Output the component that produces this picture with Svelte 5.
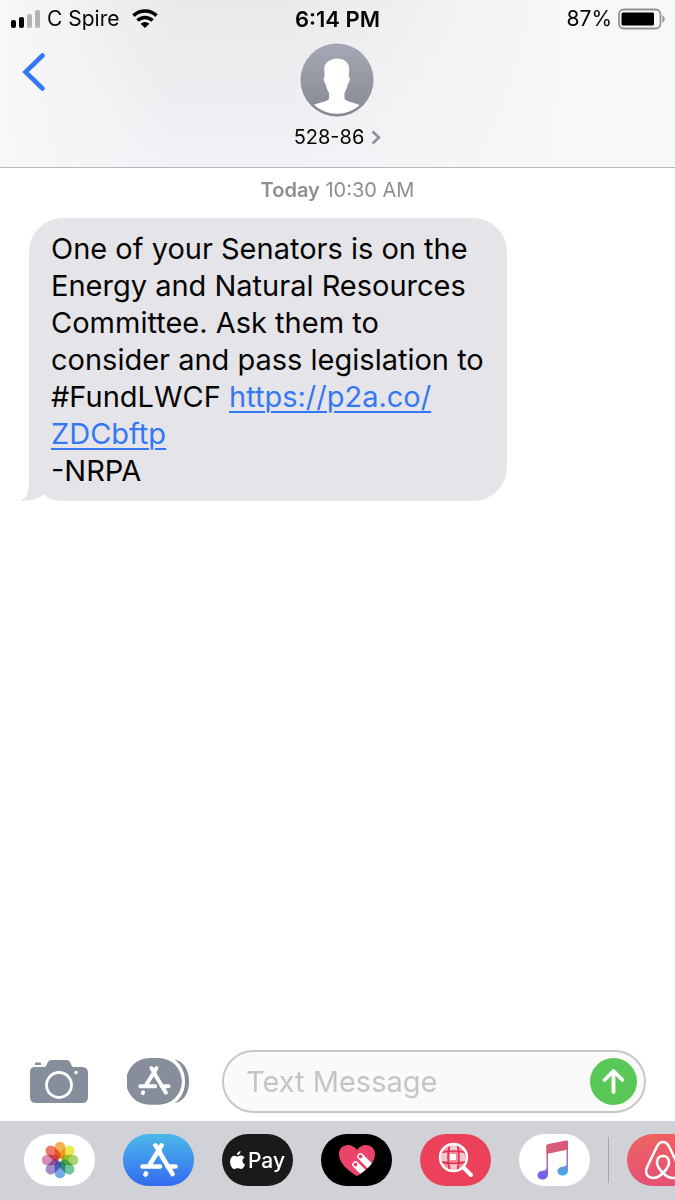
<script>
  let draft = $state('');
  const petals = [
    ['#f7a540', 0], ['#ece23c', 45], ['#9ccf5c', 90], ['#62c08a', 135],
    ['#62a2e2', 180], ['#9c7fc6', 225], ['#d283b4', 270], ['#ee6a58', 315]
  ];
</script>

{#snippet appStore()}
  <g fill="none" stroke="#fff" stroke-width="4.600" stroke-linecap="round">
    <path d="M21.500 2.500 9.500 22M15.500 2.500 20 9M20.500 11 32.500 31M2.500 23.500H20M27.500 23.500H35.500M6 30.500 5.500 31.500" />
  </g>
{/snippet}

<div class="phone">
  <header>
    <div class="status">
      <div class="carrier">
        <svg width="31" height="20" viewBox="0 0 31 20" aria-hidden="true">
          <rect x="2" y="11" width="5" height="8" rx="2" />
          <rect x="10" y="8" width="5" height="11" rx="2" />
          <rect x="18" y="5" width="5" height="14" rx="2" fill="#b4b4b6" />
          <rect x="26" y="1" width="5" height="18" rx="2" fill="#b4b4b6" />
        </svg>
        <span>C Spire</span>
        <svg class="wifi" width="26" height="19" viewBox="0 0 26 19" aria-hidden="true">
          <g fill="none" stroke="#000" stroke-width="3.600">
            <path d="M1.500 6.600A16.500 16.500 0 0 1 24.500 6.600" />
            <path d="M5.500 11.500A10.800 10.800 0 0 1 20.500 11.500" />
          </g>
          <path d="M8.600 14.800a6.200 6.200 0 0 1 8.800 0L13 19z" />
        </svg>
      </div>
      <time>6:14 PM</time>
      <div class="battery">
        <span>87%</span>
        <svg width="48" height="22" viewBox="0 0 48 22" aria-hidden="true">
          <rect x="1" y="1.500" width="41.500" height="19" rx="5" fill="none" stroke="#929294" stroke-width="1.800" />
          <rect x="3.500" y="4.500" width="32.500" height="13" rx="1.500" />
          <path d="M44.500 7q4.500 4 0 8z" fill="#929294" />
        </svg>
      </div>
    </div>
    <div class="nav">
      <button class="back" aria-label="Back">
        <svg width="24" height="40" viewBox="0 0 24 40"><path d="M20.500 3.500 3.500 20l17 16.500" fill="none" stroke="#3478f6" stroke-width="4.600" stroke-linecap="round" stroke-linejoin="miter" /></svg>
      </button>
      <button class="contact">
        <svg width="74" height="74" viewBox="0 0 74 74" aria-hidden="true">
          <defs>
            <linearGradient id="grey" x2="0" y2="1"><stop stop-color="#a3a8b4" /><stop offset="1" stop-color="#858993" /></linearGradient>
            <clipPath id="face"><circle cx="37" cy="37" r="33.800" /></clipPath>
          </defs>
          <circle cx="37" cy="37" r="36.500" fill="url(#grey)" />
          <path clip-path="url(#face)" fill="#fff" d="M37 15.500c8 0 12.500 4.500 12.200 11.500l-.4 6.500c1.800.3 1 5.500-1 7.800-.6 4-1.800 6.200-3.300 8.200v6.500c3 3.200 10 3.500 16.500 6.500V75H12V62.500c6.500-3 14-3.400 17-6.500v-6.500c-1.500-2-2.700-4.200-3.300-8.200-2-2.300-2.800-7.500-1-7.800L24.300 27c-.3-5 1.700-7.500 4.700-9 2-1.600 5-2.500 8-2.500z" />
        </svg>
        <span class="name">528-86
          <svg width="10" height="15" viewBox="0 0 10 15" aria-hidden="true"><path d="m1.500 1.500 6.500 6-6.500 6" fill="none" stroke="#8e8e93" stroke-width="2.400" /></svg>
        </span>
      </button>
    </div>
  </header>

  <main>
    <p class="date"><b>Today</b> 10:30 AM</p>
    <div class="bubble">
      One of your Senators is on the Energy and Natural Resources Committee. Ask them to consider and pass legislation to #FundLWCF <a href="https://p2a.co/ZDCbftp">https://p2a.co/<wbr />ZDCbftp</a><br />-NRPA
      <svg class="tail" width="32" height="36" viewBox="0 0 32 36" aria-hidden="true">
        <path d="M0 36h32v-1q-6 0-11-3.500Q14 36 0 36z" fill="#fff" />
        <path d="M9 0v18C9 28 6 33.500 0 35.500c8 1 15-.5 20.500-4L32 24V0z" fill="#e5e4e9" />
      </svg>
    </div>
  </main>

  <form class="compose" onsubmit={(e) => e.preventDefault()}>
    <button type="button" aria-label="Camera">
      <svg width="60" height="44" viewBox="0 0 60 44">
        <g fill="#868d9b">
          <rect x="6" y="2.500" width="6" height="2.500" rx=".5" />
          <path d="M6 7h9c4 0 2-7 8-7h14c6 0 4 7 8 7h8q6 0 6 6v24q0 6-6 6H7q-6 0-6-6V12q0-5 5-5z" />
        </g>
        <circle cx="30" cy="25" r="12.500" fill="none" stroke="#fff" stroke-width="2.800" />
        <circle cx="47" cy="12.500" r="1.700" fill="#fff" />
      </svg>
    </button>
    <button type="button" aria-label="Apps">
      <svg width="63" height="48" viewBox="0 0 63 48">
        <path d="M22.500 0h9a23.400 23.400 0 0 1 0 46.800h-9a23.400 23.400 0 0 1 0-46.800z" fill="#868d9b" />
        <path d="M47.500 1.500c19.500 3 19.500 41 0 43.500 14-9 14-34 0-43.500z" fill="#868d9b" />
        <g transform="translate(11 8) scale(.86)">{@render appStore()}</g>
      </svg>
    </button>
    <div class="field">
      <input aria-label="Text Message" placeholder="Text Message" bind:value={draft} />
      <button class="send" aria-label="Send">
        <svg width="47" height="47" viewBox="0 0 47 47"><circle cx="23.500" cy="23.500" r="23.500" fill="#5ac856" /><path d="M23.500 34V13.500M14.500 22l9-9 9 9" fill="none" stroke="#fff" stroke-width="3.800" stroke-linecap="round" stroke-linejoin="round" /></svg>
      </button>
    </div>
  </form>

  <nav class="apps" aria-label="Message apps">
    <button class="white" aria-label="Photos">
      <svg width="40" height="40" viewBox="-20 -20 40 40">
        {#each petals as [color, angle]}
          <rect class="petal" x="-5.300" y="-18.300" width="10.600" height="17" rx="5.300" fill={color} transform="rotate({angle})" />
        {/each}
        <circle r="1.200" fill="#fff" />
      </svg>
    </button>
    <button class="store" aria-label="App Store">
      <svg width="38" height="34" viewBox="0 0 38 34">{@render appStore()}</svg>
    </button>
    <button class="pay" aria-label="Apple Pay">
      <svg width="15" height="19" viewBox="0 0 15 19"><path fill="#fff" d="M10.500 0c.2 2.300-1.500 4.200-3.500 4.200C6.800 2.100 8.500.3 10.500 0zM7.500 5.500c1 0 2-.9 3.500-.9 1.400 0 2.700.7 3.500 1.800-3 1.800-2.500 5.800.5 7-.8 2.200-2.300 4.600-4 4.600-1.200 0-1.800-.7-3.300-.7s-2.200.7-3.200.7C2 18-.2 13.600.1 10c.2-3.300 2.200-5.300 4.400-5.300 1.200 0 2.200.8 3 .8z" /></svg>
      <span>Pay</span>
    </button>
    <button class="black" aria-label="Digital Touch">
      <svg width="36" height="33" viewBox="0 0 36 33">
        <defs><clipPath id="heart"><path d="M18 32C13 29 0 21 0 10 0 4.500 4 1 9 1c4 0 7 2 9 5 2-3 5-5 9-5 5 0 9 3.500 9 9 0 11-13 19-18 22z" /></clipPath></defs>
        <g clip-path="url(#heart)">
          <path d="M0 0h36v33H0z" fill="#ea4469" />
          <g stroke="#fff" stroke-width="6.500" stroke-linecap="round"><path d="M21.500 12.500 37 28M16.500 20.500 31 35" /></g>
        </g>
        <g fill="#ea4469"><circle cx="21.500" cy="12.500" r="1.900" /><circle cx="16.500" cy="20.500" r="1.900" /></g>
      </svg>
    </button>
    <button class="red" aria-label="Image search">
      <svg width="36" height="36" viewBox="0 0 36 36">
        <circle cx="15.500" cy="15.500" r="13.500" fill="#f58b9c" />
        <path d="M4 11h7v8H3zM20 11h6l2 8h-8zM12 3h7l1 6h-8zM12 21h8l-1 7h-6z" fill="#fbc5cd" />
        <path d="M12 12h6v6h-6z" fill="#fff" />
        <path d="M3 10.500q12.500-3 25 0M3 20q12.500 3 25 0M11.500 3q-3 12.500 0 25M19.500 3q3 12.500 0 25" fill="none" stroke="#d92f4b" stroke-width="1.600" />
        <circle cx="15.500" cy="15.500" r="13.500" fill="none" stroke="#fff" stroke-width="2.400" />
        <path d="m26 26 7 7" stroke="#fff" stroke-width="4" stroke-linecap="round" />
      </svg>
    </button>
    <button class="white" aria-label="Music">
      <svg width="36" height="40" viewBox="0 0 36 40">
        <defs>
          <linearGradient id="left" gradientUnits="userSpaceOnUse" x2="0" y2="40"><stop offset=".1" stop-color="#e35570" /><stop offset=".55" stop-color="#b868bd" /><stop offset=".9" stop-color="#7061f2" /></linearGradient>
          <linearGradient id="right" gradientUnits="userSpaceOnUse" x2="0" y2="36"><stop offset=".1" stop-color="#e35570" /><stop offset=".55" stop-color="#9a78cb" /><stop offset=".9" stop-color="#4ba3ee" /></linearGradient>
        </defs>
        <path d="M9.500 5H11v29c0 3-2 5.500-5.500 5.500-3 0-5-1.700-5-4.300 0-3.200 3-4.400 6-4.700 2-.2 3-.8 3-2.500z" fill="url(#left)" />
        <path d="M31 1v28.500c0 4-2 6-5.500 6-3 0-5-1.700-5-4.300 0-3.200 3-4.400 6-4.700 2-.2 3-.8 3-2.500V1z" fill="url(#right)" />
        <path d="M9.500 6q0-1.600 1.700-2L29 .5q2-.4 2 1.200V9.500L9.500 14z" fill="#d95b7c" />
      </svg>
    </button>
    <span class="divider"></span>
    <button class="coral" aria-label="Airbnb">
      <svg width="36" height="40" viewBox="0 0 36 40"><path d="M18 33C14 29 12 25.500 12 22.500c0-4 2.500-6.500 6-6.500s6 2.500 6 6.500c0 3-2 6.500-6 10.500-3 3-6 5-9.500 5C4 38 1 35 1 31c0-2 1-4 3-8L12 6.500C13.500 3.500 15 2 18 2s4.500 1.500 6 4.500L32 23c2 4 3 6 3 8 0 4-3 7-7.500 7-3.500 0-6.500-2-9.500-5z" fill="none" stroke="#fff" stroke-width="2.600" /></svg>
    </button>
  </nav>
</div>

<style>
  :global(body) { margin: 0; }
  .phone {
    min-height: 100vh;
    display: flex;
    flex-direction: column;
    overflow: hidden;
    background: #fff;
    color: #050505;
    font-family: Inter, "Liberation Sans", sans-serif;
  }
  button {
    border: 0;
    padding: 0;
    background: none;
    color: inherit;
    font: inherit;
    cursor: pointer;
  }
  svg { display: block; flex: none; }
  header {
    border-bottom: 1px solid #b9b9bc;
    background:
      linear-gradient(90deg, #f8f8f9 0%, #f8f8f900 26%, #f8f8f900 42%, #f8f8f9 85%),
      linear-gradient(#e9e9eb, #f1f2f6);
  }
  .status {
    display: grid;
    grid-template-columns: 1fr auto 1fr;
    align-items: center;
    height: 37px;
    padding: 0 9px;
    font-size: 21px;
  }
  .status time { font-size: 22px; font-weight: 600; }
  .carrier, .battery { display: flex; align-items: center; }
  .carrier { gap: 7px; }
  .wifi { margin-left: 6px; }
  .battery { justify-content: flex-end; gap: 6px; }
  .nav {
    display: grid;
    grid-template-columns: 1fr auto 1fr;
    align-items: start;
    padding: 6px 22px 17px;
  }
  .back { justify-self: start; padding-top: 9px; }
  .contact {
    display: flex;
    flex-direction: column;
    align-items: center;
    gap: 7px;
    font-size: 20px;
    line-height: 26px;
  }
  .name { display: flex; align-items: center; gap: 7px; }
  main { flex: 1; padding: 9px 29px; }
  .date {
    margin: 0;
    text-align: center;
    font-size: 20px;
    line-height: 26px;
    color: #8e8e93;
  }
  .date b { font-weight: 600; }
  .bubble {
    position: relative;
    box-sizing: border-box;
    width: fit-content;
    max-width: 478px;
    margin-top: 15px;
    padding: 12px 22px;
    border-radius: 34px;
    background: #e5e4e9;
    font-size: 29px;
    line-height: 37px;
  }
  .bubble a { color: #3478f6; text-decoration-thickness: 2px; text-underline-offset: 4px; }
  .tail { position: absolute; left: -9px; bottom: 0; }
  .compose {
    display: flex;
    align-items: center;
    padding: 8px 29px;
    gap: 38px;
  }
  .field {
    flex: 1;
    min-width: 0;
    display: flex;
    align-items: center;
    margin-left: -6px;
    padding: 6px 7px 6px 22px;
    border: 2px solid #c7c7cc;
    border-radius: 32px;
    background: #fafafa;
  }
  input {
    flex: 1;
    min-width: 0;
    height: 47px;
    padding: 0;
    border: 0;
    outline: 0;
    background: none;
    font: inherit;
    font-size: 29px;
  }
  input::placeholder { color: #c5c5c9; opacity: 1; }
  .apps {
    display: flex;
    align-items: center;
    gap: 28px;
    padding: 13px 0 14px 24px;
    background: #d0d2d8;
  }
  .apps button {
    flex: none;
    display: flex;
    align-items: center;
    justify-content: center;
    width: 71px;
    height: 52px;
    border-radius: 26px;
  }
  .apps .white { background: #fff; }
  .petal { mix-blend-mode: multiply; opacity: 0.9; }
  .apps .store { background: linear-gradient(#4bb8ea, #346af0); }
  .apps .pay { background: #1a1a1a; color: #fff; gap: 3px; font-size: 21px; font-weight: 500; }
  .apps .black { background: #000; }
  .apps .red { background: #ec415b; }
  .apps .coral { background: linear-gradient(#ee6260, #e55176); }
  .divider { flex: none; width: 1px; height: 46px; margin: 0 -10px; background: #a4a6ac; }
</style>
